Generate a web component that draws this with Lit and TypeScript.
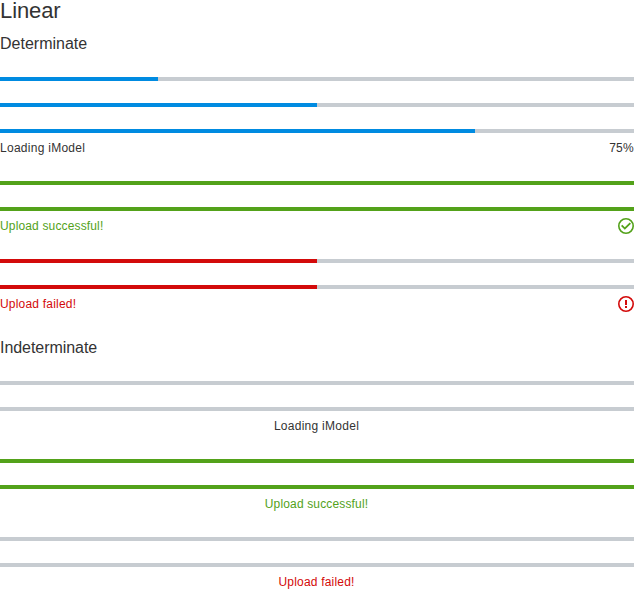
import { LitElement, html, css, svg } from "lit";
import { customElement, property } from "lit/decorators.js";

@customElement("linear-progress")
class LinearProgress extends LitElement {
  @property({ type: Number }) value = 0;
  @property() status = "";
  @property() label = "";
  @property() end = "";
  @property({ type: Boolean }) centered = false;

  static styles = css`
    :host { display: block; color: #333333; --fill: #008be1; --spacing: 0.27px; }
    .positive { --fill: #53a21a; --text: #53a21a; --spacing: 0.15px; }
    .negative { --fill: #d30a0a; --text: #d30a0a; --spacing: 0.2px; }
    .track { height: 4px; background: #c7ccd1; overflow: hidden; }
    .fill { height: 100%; background: var(--fill); }
    .label { display: flex; justify-content: space-between; align-items: center; height: 18px; padding: 6px 0 2px; font-size: 12px; line-height: 18px; letter-spacing: var(--spacing); color: var(--text, inherit); }
    .centered { justify-content: center; }
    .centered span { margin-right: 1px; }
    svg { display: block; width: 16px; height: 16px; fill: var(--fill); }
  `;

  icon() {
    const ring = svg`<path d="M8 0a8 8 0 1 0 8 8 8 8 0 0 0-8-8zm0 14.4a6.4 6.4 0 1 1 6.4-6.4 6.4 6.4 0 0 1-6.4 6.4z"/>`;
    return this.status === "positive"
      ? html`<svg viewBox="0 0 16 16">${ring}${svg`<path d="M6.8 11.8 3 8l1.3-1.3 2.5 2.5 4.9-4.8L13 5.7z"/>`}</svg>`
      : html`<svg viewBox="0 0 16 16">${ring}${svg`<path d="M7 4h2v5H7zm0 6h2v2H7z"/>`}</svg>`;
  }

  render() {
    return html`<div class=${this.status}>
      <div class="track"><div class="fill" style="width:calc(${this.value}% - 0.2px)"></div></div>
      ${this.label
        ? html`<div class="label ${this.centered ? "centered" : ""}">
            <span>${this.label}</span>
            ${this.centered ? "" : this.end ? html`<span>${this.end}</span>` : this.icon()}
          </div>`
        : ""}
    </div>`;
  }
}

@customElement("app-root")
class AppRoot extends LitElement {
  static styles = css`
    :host { display: block; height: 615px; background: #fff; color: #333333; font-family: "Liberation Sans", Arial, sans-serif; }
    h1, h2 { margin: 0; font-weight: 400; }
    h1 { font-size: 22px; line-height: 22px; letter-spacing: -0.1px; }
    h2 { font-size: 16px; line-height: 22px; margin-top: 11px; }
    .second { margin-top: 22px; letter-spacing: -0.05px; }
    .bars { display: flex; flex-direction: column; gap: 22px; padding-top: 22px; }
  `;

  render() {
    return html`
      <h1>Linear</h1>
      <h2>Determinate</h2>
      <div class="bars">
        <linear-progress value="25"></linear-progress>
        <linear-progress value="50"></linear-progress>
        <linear-progress value="75" label="Loading iModel" end="75%"></linear-progress>
        <linear-progress value="100" status="positive"></linear-progress>
        <linear-progress value="100" status="positive" label="Upload successful!"></linear-progress>
        <linear-progress value="50" status="negative"></linear-progress>
        <linear-progress value="50" status="negative" label="Upload failed!"></linear-progress>
      </div>
      <h2 class="second">Indeterminate</h2>
      <div class="bars">
        <linear-progress></linear-progress>
        <linear-progress label="Loading iModel" centered></linear-progress>
        <linear-progress value="100" status="positive"></linear-progress>
        <linear-progress value="100" status="positive" label="Upload successful!" centered></linear-progress>
        <linear-progress status="negative"></linear-progress>
        <linear-progress status="negative" label="Upload failed!" centered></linear-progress>
      </div>`;
  }
}
